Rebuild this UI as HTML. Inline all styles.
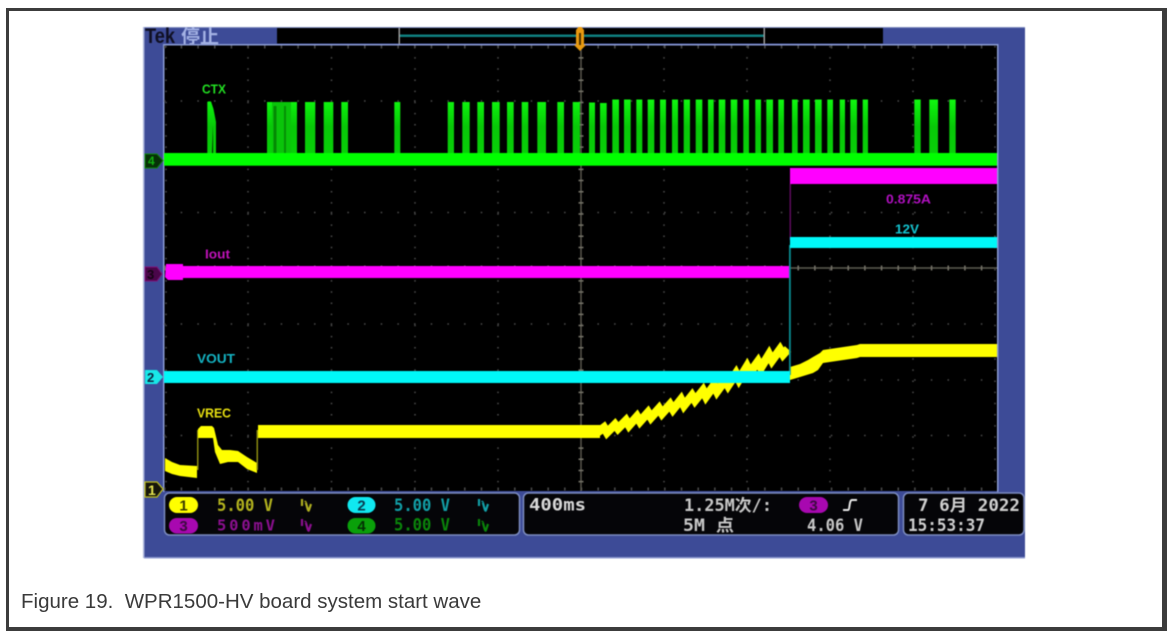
<!DOCTYPE html>
<html lang="en">
<head>
<meta charset="utf-8">
<title>Figure 19</title>
<style>
html,body{margin:0;padding:0;background:#fff;}
body{width:1170px;height:636px;overflow:hidden;position:relative;}
#frame{position:absolute;left:6px;top:8px;border-style:solid;border-color:#3c3c3c;border-width:3px 5px 4px 3px;box-sizing:content-box;width:1153px;height:616px;}
#cap{position:absolute;left:21px;top:591px;font:20.5px/22px "Liberation Sans",sans-serif;color:#3a3a3a;white-space:pre;}
svg{position:absolute;left:0;top:0;filter:blur(.6px);}
.m{font-family:"DejaVu Sans Mono","Noto Sans CJK SC",monospace;font-size:16.5px;font-weight:700;}
.s{font-family:"Liberation Sans",sans-serif;font-size:12.5px;font-weight:700;}
</style>
</head>
<body>
<div id="frame"></div>
<svg width="1170" height="636" viewBox="0 0 1170 636" xmlns="http://www.w3.org/2000/svg">
<defs>
<linearGradient id="g" gradientUnits="userSpaceOnUse" x1="0" x2="0" y1="99" y2="155">
<stop offset="0" stop-color="#10f810"/><stop offset=".25" stop-color="#0ae00a"/><stop offset=".5" stop-color="#08c808"/><stop offset="1" stop-color="#08d008"/>
</linearGradient>
</defs>
<!-- panel -->
<rect x="144" y="27" width="881" height="531" fill="#3d4b97"/>
<rect x="144" y="27" width="881" height="1" fill="#7f8cc0"/>
<rect x="144" y="557" width="881" height="1.5" fill="#8e9ad0"/>
<rect x="143" y="27" width="1.5" height="531" fill="#a9b2d8"/>
<!-- top bar -->
<rect x="277" y="28" width="606" height="15.5" fill="#000"/>
<rect x="399" y="34.500" width="365" height="2.500" fill="#0f8080"/>
<rect x="398.500" y="28" width="1.500" height="16" fill="#9a9a9a"/>
<rect x="763.500" y="28" width="1.500" height="16" fill="#9a9a9a"/>
<text x="145" y="43" font-family="Liberation Sans,sans-serif" font-size="21" font-weight="700" fill="#0f0f22" textLength="30" lengthAdjust="spacingAndGlyphs">Tek</text>
<text x="181" y="43" font-family="Noto Sans CJK SC,sans-serif" font-size="19" font-weight="700" fill="#a4b2e4">停止</text>
<!-- graticule -->
<rect x="164" y="45" width="833" height="446" fill="#000"/>
<rect x="163" y="44" width="835" height="1.500" fill="#8a9ad4"/>
<rect x="163" y="44" width="1.500" height="448" fill="#8a9ad4"/>
<rect x="997" y="44" width="1.500" height="448" fill="#8a9ad4"/>
<g stroke="#4c4c4c" stroke-width="1.500" fill="none">
<g stroke-dasharray="1.500 15.170">
<line x1="164" x2="997" y1="101" y2="101"/>
<line x1="164" x2="997" y1="157" y2="157"/>
<line x1="164" x2="997" y1="212.500" y2="212.500"/>
<line x1="164" x2="997" y1="324" y2="324"/>
<line x1="164" x2="997" y1="380" y2="380"/>
<line x1="164" x2="997" y1="435.500" y2="435.500"/>
</g>
<g stroke-dasharray="1.500 9.650">
<line y1="46" y2="491" x1="248" x2="248"/>
<line y1="46" y2="491" x1="331.500" x2="331.500"/>
<line y1="46" y2="491" x1="415" x2="415"/>
<line y1="46" y2="491" x1="498" x2="498"/>
<line y1="46" y2="491" x1="664" x2="664"/>
<line y1="46" y2="491" x1="747" x2="747"/>
<line y1="46" y2="491" x1="830" x2="830"/>
<line y1="46" y2="491" x1="913" x2="913"/>
<line y1="46" y2="491" x1="995" x2="995"/>
<line y1="46" y2="491" x1="166" x2="166"/>
</g>
<line x1="164" x2="997" y1="47" y2="47" stroke-width="3" stroke-dasharray="1.500 15.170"/>
<line x1="164" x2="997" y1="489" y2="489" stroke-width="3" stroke-dasharray="1.500 15.170"/>
</g>
<line x1="164" x2="997" y1="268" y2="268" stroke="#5e5c52" stroke-width="1.400"/>
<line x1="164" x2="997" y1="268" y2="268" stroke="#77756a" stroke-width="5" stroke-dasharray="1.500 15.170"/>
<line x1="581" x2="581" y1="46" y2="491" stroke="#5e5c52" stroke-width="1.400"/>
<line x1="581" x2="581" y1="46" y2="491" stroke="#77756a" stroke-width="5" stroke-dasharray="1.500 9.650"/>
<!-- CTX pulses -->
<g fill="url(#g)">
<path d="M207.300 155V102Q208 101 211 101.500L213.500 109L216 122V155H213V125L212 155Z"/>
<rect x="267" y="102" width="30" height="6" fill="#10ff10"/>
<path d="M267 102H297V155H267Z" fill="#0ac40a"/>
<rect x="267" y="102" width="5" height="53"/><rect x="273.500" y="106" width="3" height="49" fill="#048a04"/><rect x="284" y="106" width="2" height="49" fill="#058f05"/><rect x="291" y="102" width="6" height="53"/>
<rect x="305" y="102" width="10.300" height="53"/><rect x="323.700" y="102" width="9.600" height="53"/><rect x="341.300" y="102" width="6.700" height="53"/><rect x="394.300" y="102" width="6" height="53"/><rect x="447.700" y="102" width="6.300" height="53"/><rect x="462.300" y="102" width="7.400" height="53"/><rect x="477.300" y="102" width="6.700" height="53"/><rect x="492" y="102" width="7.700" height="53"/><rect x="507" y="102" width="6.700" height="53"/><rect x="521.700" y="102" width="6.600" height="53"/><rect x="537.300" y="102" width="8.700" height="53"/><rect x="557.300" y="102" width="6.700" height="53"/><rect x="572.700" y="102" width="7.300" height="53"/>
<rect x="589" y="102.500" width="6" height="53"/><rect x="600" y="103" width="6.700" height="52"/>
<rect x="612.300" y="99.500" width="6.700" height="56"/><rect x="624" y="99.500" width="6.700" height="56"/><rect x="636.300" y="99.500" width="6" height="56"/><rect x="647.700" y="99.500" width="6.600" height="56"/><rect x="660" y="99.500" width="6" height="56"/><rect x="672" y="99.500" width="6" height="56"/><rect x="683.700" y="99.500" width="6.300" height="56"/><rect x="695.700" y="99.500" width="6.600" height="56"/><rect x="708" y="99.500" width="5.700" height="56"/><rect x="718.700" y="99.500" width="6.600" height="56"/><rect x="730.700" y="99.500" width="6.600" height="56"/><rect x="743.300" y="99.500" width="5.700" height="56"/><rect x="755.300" y="99.500" width="5.700" height="56"/><rect x="766.300" y="99.500" width="6.700" height="56"/><rect x="778.300" y="99.500" width="5.700" height="56"/><rect x="792" y="99.500" width="5.700" height="56"/><rect x="803" y="99.500" width="6.700" height="56"/><rect x="815" y="99.500" width="6.700" height="56"/><rect x="827.300" y="99.500" width="5.700" height="56"/><rect x="839.700" y="99.500" width="5.300" height="56"/><rect x="850.300" y="99.500" width="6.700" height="56"/><rect x="862.700" y="99.500" width="5.300" height="56"/><rect x="914.300" y="99.500" width="6.400" height="56"/><rect x="929.300" y="99.500" width="8.700" height="56"/><rect x="949.300" y="99.500" width="6.400" height="56"/>
</g>
<rect x="164" y="153" width="833" height="12.700" fill="#00ff00"/>
<!-- VREC -->
<path d="M165 458L172 462L180 465L197 466V478L180 476L172 474L165 471Z" fill="#ffff00"/>
<rect x="197" y="430" width="1.500" height="40" fill="#8a8a10"/>
<path d="M198 429L201 426H212L214 428V438H198Z" fill="#ffff00"/>
<path d="M214 428L218 445L222 450L230 450L238 451L247 457L257 463V473L247 469L238 462H228L220 464L215 452L213 438Z" fill="#ffff00"/>
<rect x="256.500" y="430" width="1.500" height="40" fill="#8a8a10"/>
<path d="M258 425H600V438H258Z" fill="#ffff00"/>
<polyline fill="none" stroke="#ffff00" stroke-width="8.500" stroke-linejoin="miter" stroke-miterlimit="2.500" points="592,431.500 598,432 604,427.500 607,432.500 615,424.500 618,428.500 626,420.500 629,425.500 637,416.500 640,421.500 648,412.500 651,417.500 659,408.500 662,413.500 670,404.500 673,409.500 681,399.500 684,405.500 692,395.500 695,400.500 703,390.500 706,396.500 714,385.500 717,391.500 725,380.500 728,385.500 736,373.500 739,379.500 747,366.500 750,372.500 758,361.500 761,367.500 769,354.500 772,360.500 780,349.500 783,354.500 788,349"/>
<path d="M790 367L800 364L808 360L813 357L820 353L823 350L857 345L860 344H997V357H860L857 358L823 363L818 370L813 373L800 377L790 380Z" fill="#ffff00"/>
<!-- magenta -->
<rect x="789.500" y="184" width="1.500" height="56" fill="#5c0a5c"/>
<path d="M166 264H183V266H790V278H183V280H168L165 277Z" fill="#ff00ff"/>
<rect x="790" y="168" width="207" height="16" fill="#ff00ff"/>
<!-- cyan -->
<rect x="789" y="245" width="1.800" height="130" fill="#0a8c90"/>
<rect x="164" y="371" width="626" height="12" fill="#00f8f8"/>
<rect x="790" y="237" width="207" height="11" fill="#00f8f8"/>
<!-- wave labels -->
<text class="s" x="202" y="93.500" fill="#22e022" textLength="24" lengthAdjust="spacingAndGlyphs">CTX</text>
<text class="s" x="205" y="258.500" fill="#c012b8" textLength="25" lengthAdjust="spacingAndGlyphs">Iout</text>
<text class="s" x="197" y="363" fill="#14b4c4" font-size="13" textLength="38" lengthAdjust="spacingAndGlyphs">VOUT</text>
<text class="s" x="197" y="417.500" fill="#e8e010" textLength="34" lengthAdjust="spacingAndGlyphs">VREC</text>
<text class="s" x="886" y="203.500" fill="#b010c0" textLength="45" lengthAdjust="spacingAndGlyphs">0.875A</text>
<text class="s" x="895" y="233.500" fill="#14c4d0" textLength="24" lengthAdjust="spacingAndGlyphs">12V</text>
<!-- ch markers -->
<path d="M145 154H157L163 160.500L157 168H145Z" fill="#063006" stroke="#0a8a0a" stroke-width="1"/>
<text x="148" y="165" font-family="Liberation Sans,sans-serif" font-size="12" font-weight="700" fill="#10b010">4</text>
<path d="M145 267H157L162 274L157 281H145Z" fill="#4a064a" stroke="#80107a" stroke-width="1"/>
<text x="147" y="279" font-family="Liberation Sans,sans-serif" font-size="13" font-weight="700" fill="#140414">3</text>
<path d="M145 370H157L163 377L157 384H145Z" fill="#18e8e8"/>
<text x="147" y="382" font-family="Liberation Sans,sans-serif" font-size="13" font-weight="700" fill="#0c2440">2</text>
<path d="M145 482H157L163 489L157 497H145Z" fill="#16160a" stroke="#c0c020" stroke-width="1.200"/>
<text x="148" y="495" font-family="Liberation Sans,sans-serif" font-size="14" font-weight="700" fill="#e8e850">1</text>
<!-- trigger marker -->
<path d="M576 30L578.500 27H581.500L584 30V45L586 45L580 51L574 45L576 45Z" fill="#e89a10"/>
<rect x="579" y="33" width="2" height="12" fill="#4a3000"/>
<!-- readout boxes -->
<rect x="164.500" y="493" width="355" height="42" rx="5" fill="#050508" stroke="#7c8cc0" stroke-width="1.500"/>
<rect x="523.500" y="493" width="375" height="42" rx="5" fill="#050508" stroke="#7c8cc0" stroke-width="1.500"/>
<rect x="903.500" y="493" width="120.500" height="42" rx="5" fill="#050508" stroke="#7c8cc0" stroke-width="1.500"/>
<!-- channel ovals -->
<rect x="169" y="497" width="29" height="16" rx="8" fill="#ffff00"/>
<rect x="169" y="518" width="29" height="15.500" rx="7.750" fill="#a808b0"/>
<rect x="347.500" y="497" width="28" height="16" rx="8" fill="#10e8f0"/>
<rect x="347.500" y="518" width="28" height="15.500" rx="7.750" fill="#0aa00a"/>
<rect x="799" y="497" width="29" height="16" rx="8" fill="#a808b0"/>
<g font-family="Liberation Sans,sans-serif" font-size="15" font-weight="700" text-anchor="middle">
<text x="183.500" y="510.500" fill="#3a3a00">1</text>
<text x="183.500" y="531" fill="#3c0a40">3</text>
<text x="361.500" y="510.500" fill="#0a3a50">2</text>
<text x="361.500" y="531" fill="#043004">4</text>
<text x="813.500" y="510.500" fill="#3c0a40">3</text>
</g>
<!-- readouts -->
<text class="m" x="217" y="511" fill="#b4b41e" textLength="56" lengthAdjust="spacingAndGlyphs">5.00 V</text>
<text class="m" x="217" y="530.500" fill="#8c1090" textLength="58" lengthAdjust="spacing" style="font-size:15.5px">500mV</text>
<text class="m" x="394" y="511" fill="#12a0a8" textLength="56" lengthAdjust="spacingAndGlyphs">5.00 V</text>
<text class="m" x="394" y="530.500" fill="#0a860a" textLength="56" lengthAdjust="spacingAndGlyphs">5.00 V</text>
<g fill="none" stroke-width="2.200">
<path d="M302 499V506M305 502C306 500 308 514 309 510L311 504" stroke="#b0b020"/>
<path d="M302 519V526M305 522C306 520 308 534 309 530L311 524" stroke="#8c1090"/>
<path d="M479 499V506M482 502C483 500 485 514 486 510L488 504" stroke="#12a0a8"/>
<path d="M479 519V526M482 522C483 520 485 534 486 530L488 524" stroke="#0a860a"/>
</g>
<text class="m" x="529" y="510.500" fill="#d8d8d8" textLength="57" lengthAdjust="spacingAndGlyphs">400ms</text>
<text class="m" x="684" y="511" fill="#c8c8c8" textLength="88" lengthAdjust="spacingAndGlyphs">1.25M次/:</text>
<text class="m" x="683" y="531" fill="#c8c8c8" textLength="51" lengthAdjust="spacingAndGlyphs">5M 点</text>
<text class="m" x="807" y="531" fill="#c8c8c8" textLength="56" lengthAdjust="spacingAndGlyphs">4.06 V</text>
<path d="M843 510H848C850 510 849 500 852 500H857" fill="none" stroke="#e8e8e8" stroke-width="2"/>
<text class="m" x="918" y="511" fill="#d0d0d0" textLength="102" lengthAdjust="spacingAndGlyphs">7 6月 2022</text>
<text class="m" x="908" y="531" fill="#d0d0d0" textLength="77" lengthAdjust="spacingAndGlyphs">15:53:37</text>
</svg>
<div id="cap">Figure 19.  WPR1500-HV board system start wave</div>
</body>
</html>
